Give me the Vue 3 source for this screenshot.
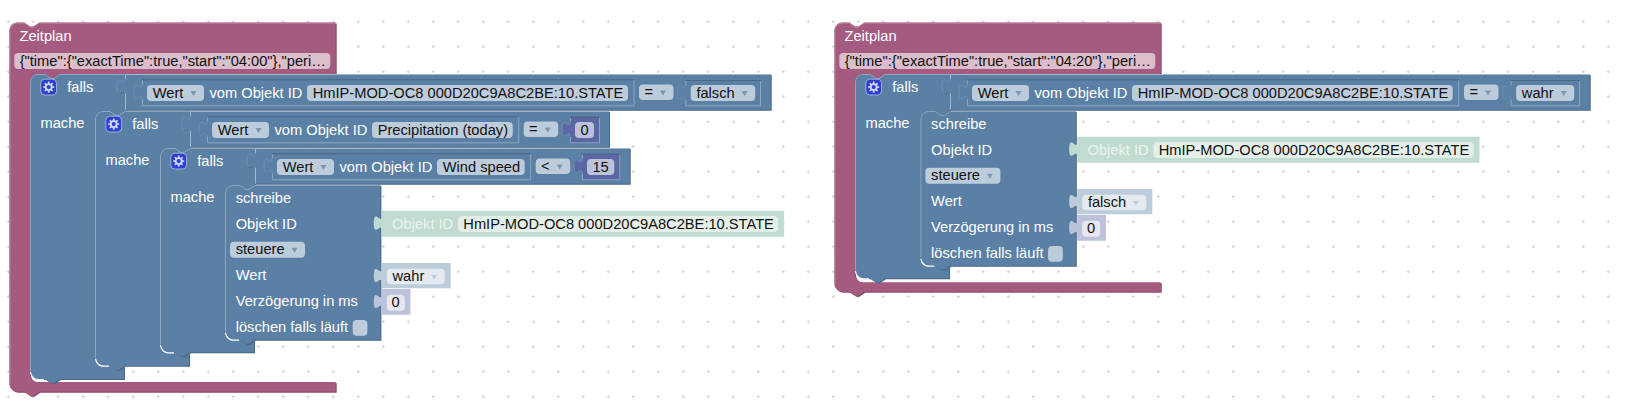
<script setup>
const BLUE = { fill: '#5b80a5', dark: '#496684', light: '#8ca6c0', field: '#bdccdb' }
const PINK = { fill: '#a55b80', dark: '#844966', light: '#c08ca6', field: '#dbbdcc' }
const items = []
let id = 0
const path = (d, fill, stroke = 'none', extra = {}) => items.push({ id: id++, t: 'path', d, fill, stroke, ...extra })
const rect = (x, y, r, b, fill, rx = 4, stroke = 'none') =>
  items.push({ id: id++, t: 'rect', x, y, w: r - x, h: b - y, fill, rx, stroke })
const label = (x, y, s, fill = '#fff') => items.push({ id: id++, t: 'text', x, y, s, fill })

const notch = 'l6,4 3,0 6,-4'
const notchBack = 'l-6,4 -3,0 -6,-4'
const tabUp = 'c0,-10 -8,8 -8,-7.5 s8,2.5 8,-7.5'

function shaded(d, c) {
  path(d, c.dark, 'none', { tx: 1 })
  path(d, c.fill)
}

function topEdge(x, y, bottom, right, c) {
  path(`M${x + 0.5},${bottom} V${y + 8} a7.5,7.5 0 0 1 7.5,-7.5 H${x + 15} ${notch} H${right}`, 'none', c.light)
}

function whiteCorner(x, bottom) {
  path(`M${x + 0.5},${bottom - 7} a8,8 0 0 0 8,7.5 H${x + 14}`, 'none', '#fff', { sw: 1.2 })
}

function zeitplan(x, top, right, innerX, innerY, barTop, barBot, text) {
  const d = `M${x},${top + 8} a8,8 0 0 1 8,-8 H${x + 15} ${notch} H${right} V${innerY} H${innerX + 30} ${notchBack} H${innerX + 8} a8,8 0 0 0 -8,8 V${barTop - 8} a8,8 0 0 0 8,8 H${right} V${barBot} H${x + 30} ${notchBack} H${x + 8} a8,8 0 0 1 -8,-8 Z`
  shaded(d, PINK)
  topEdge(x, top, barBot - 8, right, PINK)
  label(x + 10.2, 40.5, 'Zeitplan')
  rect(x + 5, 53, x + 321, 69, PINK.field)
  label(x + 10.4, 66, text, '#111')
}

function gear(cx, cy) {
  let d = ''
  const n = 8
  for (let i = 0; i < n; i++) {
    const a = (i / n) * Math.PI * 2
    const w = Math.PI / n
    const pts = [
      [a - w * 0.62, 4],
      [a - w * 0.34, 5.6],
      [a + w * 0.34, 5.6],
      [a + w * 0.62, 4],
    ]
    for (const [ang, r] of pts) {
      d += `${d ? 'L' : 'M'}${(cx + r * Math.cos(ang)).toFixed(2)},${(cy + r * Math.sin(ang)).toFixed(2)} `
    }
  }
  d += 'Z'
  path(d, '#cfd8f2')
  items.push({ id: id++, t: 'circle', cx, cy, r: 2.1, fill: '#2f3fd4' })
}

function falls(x, y, stmtBottom, barBottom) {
  const right = x + 95
  const barRight = right - 1
  const ix = x + 65
  const it = y + 37
  const bot = barBottom - 1
  const d = `M${x},${y + 8} a8,8 0 0 1 8,-8 H${x + 15} ${notch} H${right} V${it} H${ix + 30} ${notchBack} H${ix + 8} a8,8 0 0 0 -8,8 V${stmtBottom - 8} a8,8 0 0 0 8,8 H${barRight} V${bot} H${x + 30} ${notchBack} H${x + 8} a8,8 0 0 1 -8,-8 Z`
  shaded(d, BLUE)
  topEdge(x, y, bot - 8, right, BLUE)
  whiteCorner(x, bot)
  rect(x + 10.8, y + 5.2, x + 26.6, y + 21, '#2f3fd4', 4, '#9db2d6')
  gear(x + 18.7, y + 13.1)
  label(x + 37.3, y + 17.7, 'falls')
  label(x + 10.5, y + 54, 'mache')
}

function tabbed(x, y, r, b) {
  return `M${x},${y} H${r} V${b} H${x} V${y + 20} ${tabUp} Z`
}

// a value socket: filled, light on the left, bottom and right, dark along the top and tab
function socket(x, y, r, b, fill) {
  path(tabbed(x, y, r, b), fill)
  path(`M${x + 0.5},${y + 20} V${b - 0.5} H${r - 0.5} V${y}`, 'none', BLUE.light)
  path(`M${x + 0.5},${y + 5} V${y + 0.5}`, 'none', BLUE.light)
  path(`M${x},${y + 0.5} H${r}`, 'none', BLUE.dark)
  path(`M${x},${y + 20} ${tabUp}`, 'none', '#7290ae')
}

function dropdown(x, y, r, b, text, arrow = '#7d97b2', fill = BLUE.field, tx = 5.7, ty = 13) {
  rect(x, y, r, b, fill)
  label(x + tx, y + ty, text, '#111')
  path(`M${r - 13.5},${y + 6} h6 l-3,5 Z`, arrow)
}

function condition(fx, y, fieldRight, opX, right, name, op, value) {
  const x = fx + 95
  const r = right - 1
  const b = y + 35.7
  path(tabbed(x, y, r, b), BLUE.dark, 'none', { tx: 1 })
  path(tabbed(x, y, r, b), BLUE.fill)
  path(`M${x + 0.5},${b} V${y + 20} M${x + 0.5},${y + 5} V${y + 0.5} H${r}`, 'none', '#a3b8cd')
  path(`M${x},${y + 20} ${tabUp}`, 'none', '#7290ae')

  const bx = fx + 112
  const br = fieldRight + 6.5
  socket(bx, y + 5.3, br, y + 32.3, BLUE.fill)
  dropdown(fx + 117, y + 11, fx + 174, y + 27, 'Wert')
  label(fx + 179.5, y + 23.7, 'vom Objekt ID')
  rect(fx + 277, y + 11, fieldRight, y + 27, BLUE.field)
  label(fx + 282.7, y + 23.7, name, '#111')

  dropdown(opX, y + 10.4, opX + 34.5, y + 26, op, '#7d97b2', BLUE.field, 5.4, 12.6)
  value(y)
}

function logicValue(x, r, text) {
  return (y) => {
    socket(x, y + 6, r, y + 32.3, BLUE.fill)
    dropdown(x + 5.4, y + 11, r - 5.8, y + 27, text)
  }
}

function numberValue(x, r, text) {
  return (y) => {
    socket(x, y + 5.8, r, y + 32.3, '#5b67a5')
    rect(x + 5, y + 11, r - 6, y + 27, '#bdc2db')
    label(x + 10.4, y + 23.7, text, '#111')
  }
}

function schreibe(x, y) {
  const right = x + 155.4
  const bottom = y + 154.7
  const d = `M${x},${y + 8} a8,8 0 0 1 8,-8 H${x + 15} ${notch} H${right} V${bottom} H${x + 30} ${notchBack} H${x + 8} a8,8 0 0 1 -8,-8 Z`
  shaded(d, BLUE)
  topEdge(x, y, bottom - 8, right, BLUE)
  whiteCorner(x, bottom)

  label(x + 10.7, y + 17.5, 'schreibe')
  label(x + 10.7, y + 43.5, 'Objekt ID')
  dropdown(x + 5, y + 56.7, x + 80, y + 72.7, 'steuere', '#7d97b2', BLUE.field, 5.7, 12.3)
  label(x + 10.7, y + 95, 'Wert')
  label(x + 10.7, y + 121.3, 'Verzögerung in ms')
  label(x + 10.7, y + 147.3, 'löschen falls läuft')
  rect(x + 127.7, y + 135, x + 142.4, y + 150.7, BLUE.field)

  const v = x + 156.8
  path(tabbed(v, y + 25.7, v + 402.3, y + 51.7), '#c0dbcf')
  label(v + 10.3, y + 43.5, 'Objekt ID', '#eaf4ef')
  rect(v + 76.3, y + 31, v + 396.3, y + 47, '#e5efea')
  label(v + 81.5, y + 43.5, 'HmIP-MOD-OC8 000D20C9A8C2BE:10.STATE', '#111')
}

function wertValue(x, y, text, width) {
  const r = x + width
  path(tabbed(x, y + 78, r, y + 103.3), BLUE.field)
  dropdown(x + 5, y + 83.7, r - 6, y + 99.3, text, BLUE.field, '#e4eaf0', 5.7, 12.3)
}

function delayValue(x, y) {
  path(tabbed(x, y + 104, x + 28.7, y + 129.7), '#bdc2db')
  rect(x + 5, y + 109.7, x + 23, y + 125.7, '#e5e7f1')
  label(x + 9.8, y + 122.2, '0', '#111')
}

const cron = (t) => `{"time":{"exactTime":true,"start":"${t}"},"peri…`
const ID = 'HmIP-MOD-OC8 000D20C9A8C2BE:10.STATE'

// first program
zeitplan(9.3, 22.5, 335.7, 30, 74, 382, 391.7, cron('04:00'))
falls(30, 74, 366.7, 380)
condition(30, 74, 628, 639, 771.7, ID, '=', logicValue(685.3, 761, 'falsch'))
falls(95, 111, 353.3, 366.7)
condition(95, 111, 512.7, 523.7, 610, 'Precipitation (today)', '=', numberValue(570, 600, '0'))
falls(160, 148, 340.7, 353.3)
condition(160, 148, 524.7, 535.7, 630.7, 'Wind speed', '<', numberValue(582, 620.3, '15'))
schreibe(225, 185)
wertValue(381.8, 185, 'wahr', 68.9)
delayValue(381.8, 185)

// second program
zeitplan(834.3, 22.5, 1160.7, 855, 74, 282.3, 291.7, cron('04:20'))
falls(855, 74, 266.7, 279.3)
condition(855, 74, 1452.7, 1464, 1590.7, ID, '=', logicValue(1510.7, 1580, 'wahr'))
schreibe(920.4, 111)
wertValue(1077.2, 111, 'falsch', 75.1)
delayValue(1077.2, 111)
</script>

<template>
  <div class="canvas">
    <svg class="workspace" width="1631" height="405" viewBox="0 0 1631 405">
      <defs>
        <pattern id="dots" x="6.8" y="20.2" width="25" height="25" patternUnits="userSpaceOnUse">
          <path d="M0,1.5 H3 M1.5,0 V3" stroke="#d2d2d2" stroke-width="1" fill="none" />
        </pattern>
      </defs>
      <rect width="1631" height="405" fill="url(#dots)" />
      <template v-for="it in items" :key="it.id">
        <path
          v-if="it.t === 'path'"
          :d="it.d"
          :fill="it.fill"
          :stroke="it.stroke"
          :stroke-width="it.sw || 1"
          :transform="it.tx ? 'translate(1,1)' : null"
        />
        <rect
          v-else-if="it.t === 'rect'"
          :x="it.x"
          :y="it.y"
          :width="it.w"
          :height="it.h"
          :rx="it.rx"
          :fill="it.fill"
          :stroke="it.stroke"
        />
        <circle v-else-if="it.t === 'circle'" :cx="it.cx" :cy="it.cy" :r="it.r" :fill="it.fill" />
        <text v-else class="lbl" :x="it.x" :y="it.y" :fill="it.fill">{{ it.s }}</text>
      </template>
    </svg>
  </div>
</template>

<style scoped>
.canvas {
  width: 1631px;
  height: 405px;
  background: #fff;
  overflow: hidden;
}
.workspace {
  display: block;
}
.lbl {
  font-family: "Liberation Sans", Arial, sans-serif;
  font-size: 14.67px;
}
</style>
<style>
html,
body {
  margin: 0;
  background: #fff;
}
</style>
